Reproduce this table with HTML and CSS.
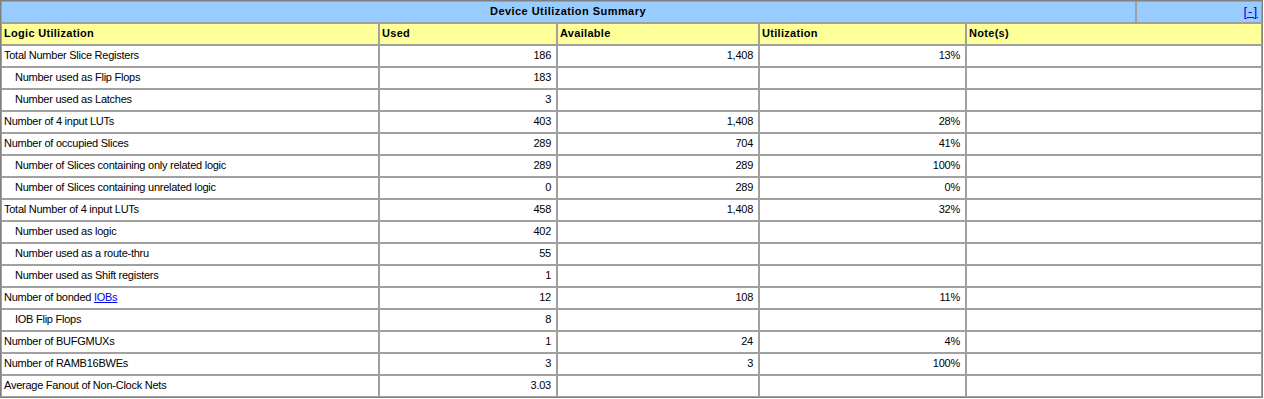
FILE: index.html
```html
<!DOCTYPE html>
<html>
<head>
<meta charset="utf-8">
<link rel="stylesheet" href="styles.css">
</head>
<body>
<table class="summary">
  <colgroup>
    <col class="c1"><col class="c2"><col class="c3"><col class="c4"><col class="c5"><col class="c6">
  </colgroup>
  <tr class="title">
    <td colspan="5" class="center"><b>Device Utilization Summary</b></td>
    <td class="right"><a href="#" class="toggle">[-]</a></td>
  </tr>
  <tr class="head">
    <td>Logic Utilization</td><td>Used</td><td>Available</td><td>Utilization</td><td colspan="2">Note(s)</td>
  </tr>
  <tr><td>Total Number Slice Registers</td><td class="num">186</td><td class="num">1,408</td><td class="num">13%</td><td colspan="2"></td></tr>
  <tr><td class="sub">Number used as Flip Flops</td><td class="num">183</td><td></td><td></td><td colspan="2"></td></tr>
  <tr><td class="sub">Number used as Latches</td><td class="num">3</td><td></td><td></td><td colspan="2"></td></tr>
  <tr><td>Number of 4 input LUTs</td><td class="num">403</td><td class="num">1,408</td><td class="num">28%</td><td colspan="2"></td></tr>
  <tr><td>Number of occupied Slices</td><td class="num">289</td><td class="num">704</td><td class="num">41%</td><td colspan="2"></td></tr>
  <tr><td class="sub">Number of Slices containing only related logic</td><td class="num">289</td><td class="num">289</td><td class="num">100%</td><td colspan="2"></td></tr>
  <tr><td class="sub">Number of Slices containing unrelated logic</td><td class="num">0</td><td class="num">289</td><td class="num">0%</td><td colspan="2"></td></tr>
  <tr><td>Total Number of 4 input LUTs</td><td class="num">458</td><td class="num">1,408</td><td class="num">32%</td><td colspan="2"></td></tr>
  <tr><td class="sub">Number used as logic</td><td class="num">402</td><td></td><td></td><td colspan="2"></td></tr>
  <tr><td class="sub">Number used as a route-thru</td><td class="num">55</td><td></td><td></td><td colspan="2"></td></tr>
  <tr><td class="sub">Number used as Shift registers</td><td class="num">1</td><td></td><td></td><td colspan="2"></td></tr>
  <tr><td>Number of bonded <a href="#">IOBs</a></td><td class="num">12</td><td class="num">108</td><td class="num">11%</td><td colspan="2"></td></tr>
  <tr><td class="sub">IOB Flip Flops</td><td class="num">8</td><td></td><td></td><td colspan="2"></td></tr>
  <tr><td>Number of BUFGMUXs</td><td class="num">1</td><td class="num">24</td><td class="num">4%</td><td colspan="2"></td></tr>
  <tr><td>Number of RAMB16BWEs</td><td class="num">3</td><td class="num">3</td><td class="num">100%</td><td colspan="2"></td></tr>
  <tr><td>Average Fanout of Non-Clock Nets</td><td class="num">3.03</td><td></td><td></td><td colspan="2"></td></tr>
</table>
</body>
</html>
```

FILE: styles.css
```css
html, body {
  margin: 0;
  padding: 0;
  background: #ffffff;
}
body {
  font-family: "Liberation Sans", Arial, sans-serif;
  font-size: 11px;
  color: #000000;
}
.summary {
  width: 1263px;
  table-layout: fixed;
  border-collapse: separate;
  border-spacing: 0;
  border: 1px solid #808080;
}
.c1 { width: 378px; }
.c2 { width: 178px; }
.c3 { width: 202px; }
.c4 { width: 207px; }
.c5 { width: 170px; }
.c6 { width: 126px; }
.summary td {
  box-sizing: border-box;
  border: 1px solid #a0a0a0;
  height: 22px;
  padding: 0 3px 1px 2px;
  line-height: 19px;
  white-space: nowrap;
  overflow: hidden;
  vertical-align: middle;
  letter-spacing: -0.25px;
}
.title td {
  background: #99ccff;
}
.title b {
  letter-spacing: 0.45px;
}
.head td {
  background: #ffff99;
  font-weight: bold;
  letter-spacing: 0.3px;
}
.center { text-align: center; }
.right { text-align: right; }
.summary td.num { text-align: right; padding-right: 5px; }
.summary td.sub { padding-left: 13px; }
a { color: #0000ee; text-decoration: underline; }
.toggle {
  display: inline-block;
  font-size: 13px;
  line-height: 19px;
  vertical-align: top;
  letter-spacing: 1px;
}
```
